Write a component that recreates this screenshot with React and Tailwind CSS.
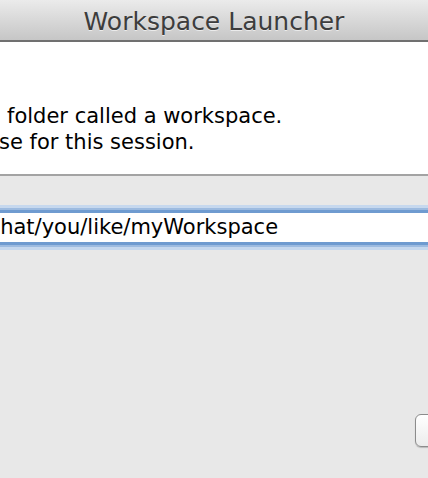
import React from 'react';

const font = { fontFamily: '"DejaVu Sans", "Noto Sans", sans-serif' };

export default function App() {
  return (
    <div className="w-[428px] h-[478px] overflow-hidden bg-[#e8e8e8] flex flex-col" style={font}>
      {/* title bar */}
      <div className="h-[42px] shrink-0 bg-gradient-to-b from-[#ebebeb] to-[#c6c6c6] border-b-2 border-[#707070] text-center">
        <span className="text-[25px] leading-[44px] text-[#3d3d3d] [text-shadow:0_1px_0_rgba(255,255,255,0.6)] whitespace-nowrap">
          Workspace Launcher
        </span>
      </div>

      {/* description */}
      <div className="h-[134px] shrink-0 bg-white border-b-2 border-[#a3a3a3] pt-[61px] text-[21px] leading-[26px] text-black whitespace-nowrap">
        <div className="ml-[7px]">folder called a workspace.</div>
        <div className="-ml-[1px]">se for this session.</div>
      </div>

      {/* workspace field */}
      <div className="mt-[34px] w-[460px] -ml-[16px] h-[35px] shrink-0 bg-white border-y-[3px] border-[#6f9bd0] shadow-[0_0_0_2px_#9dbbe0,0_0_0_5px_#c6d8ee] overflow-hidden">
        <div className="-ml-[1px] text-[21px] leading-[29px] text-black whitespace-nowrap">
          what/you/like/myWorkspace
        </div>
      </div>

      {/* buttons */}
      <div className="mt-[169px] flex justify-end">
        <div className="w-[90px] h-[33px] -mr-[77px] rounded-[6px] border border-[#8c8c8c] bg-gradient-to-b from-white to-[#ececec] shadow-[0_1px_1px_rgba(0,0,0,0.2)]" />
      </div>
    </div>
  );
}
